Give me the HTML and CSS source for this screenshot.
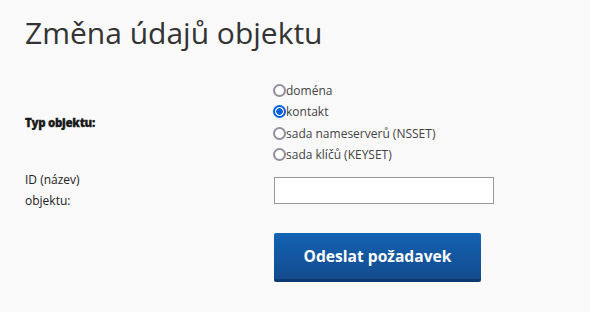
FILE: index.html
```html
<!DOCTYPE html>
<html lang="cs">
<head>
<meta charset="utf-8">
<title>Změna údajů objektu</title>
<link rel="stylesheet" href="styles.css">
</head>
<body>
<main class="page">
  <h1 class="title">Změna údajů objektu</h1>
  <form class="form">
    <div class="row row-type">
      <div class="label label-bold">Typ objektu:</div>
      <div class="value radios">
        <label class="radio"><input type="radio" name="typ" class="radio-input"><span>doména</span></label>
        <label class="radio"><input type="radio" name="typ" class="radio-input" checked><span>kontakt</span></label>
        <label class="radio"><input type="radio" name="typ" class="radio-input"><span>sada nameserverů (NSSET)</span></label>
        <label class="radio"><input type="radio" name="typ" class="radio-input"><span>sada klíčů (KEYSET)</span></label>
      </div>
    </div>
    <div class="row row-id">
      <div class="label label-normal">ID (název)<br>objektu:</div>
      <div class="value"><input type="text" class="text-input"></div>
    </div>
    <div class="row row-submit">
      <div class="label"></div>
      <div class="value"><button type="button" class="btn">Odeslat požadavek</button></div>
    </div>
  </form>
</main>
</body>
</html>
```
FILE: styles.css
```css
html, body {
  margin: 0;
  padding: 0;
  background: #f9f9f9;
}
body {
  font-family: "Open Sans", "DejaVu Sans", sans-serif;
  color: #333;
}
.page {
  padding: 13px 25px 0 25px;
}
.title {
  margin: 0;
  font-size: 30px;
  line-height: 40px;
  font-weight: 400;
  color: #333;
}
.form {
  margin-top: 27px;
  display: flex;
  flex-direction: column;
}
.row {
  display: grid;
  grid-template-columns: 248px auto;
  align-items: center;
}
.row-id {
  margin-top: 4px;
}
.row-submit {
  margin-top: 22px;
}
.label {
  font-size: 12px;
  line-height: 21px;
  color: #222;
}
.label-bold {
  font-weight: 800;
  font-size: 11.5px;
  letter-spacing: -0.3px;
  color: #1a1a1a;
  -webkit-text-stroke: 0.3px #1a1a1a;
}
.radios {
  display: flex;
  flex-direction: column;
}
.radio {
  display: flex;
  align-items: center;
  height: 21.33px;
  font-size: 12px;
  color: #444;
}
.radio-input {
  appearance: none;
  -webkit-appearance: none;
  margin: 0;
  width: 13px;
  height: 13px;
  border: 2px solid #8f8f9d;
  border-radius: 50%;
  background: #fff;
  box-sizing: border-box;
  flex: none;
}
.radio-input:checked {
  border-color: #0060df;
  background: radial-gradient(circle, #0060df 0 3px, #fff 3.5px);
}
.text-input {
  display: block;
  width: 220px;
  height: 27px;
  box-sizing: border-box;
  border: 1px solid #999;
  background: #fff;
  margin: 1px 0 0 1px;
}
.btn {
  display: block;
  margin-left: 1px;
  width: 207px;
  height: 49px;
  border: none;
  border-bottom: 3px solid #0b3a73;
  border-radius: 2px;
  background: linear-gradient(#1462b3, #134b8d);
  color: #fff;
  font-family: "Open Sans", sans-serif;
  font-weight: 700;
  font-size: 15.6px;
  padding: 0;
}
```
